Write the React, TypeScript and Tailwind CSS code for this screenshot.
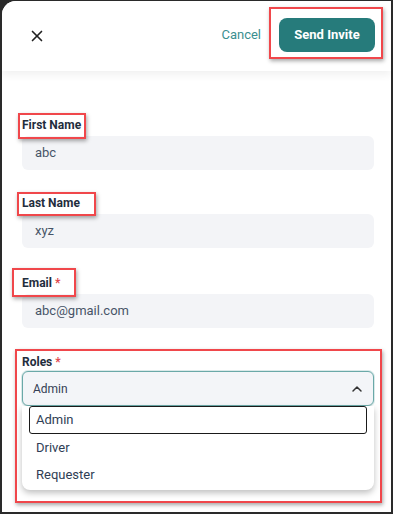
import { X, ChevronUp } from 'lucide-react';

function Mark({ className }: { className: string }) {
  // red annotation rectangle drawn over the screenshot
  return (
    <div
      className={`pointer-events-none absolute border-2 border-[#f0474b] shadow-[1px_2px_4px_rgba(0,0,0,0.35)] ${className}`}
    />
  );
}

function Field({ label, value, required, mark }: { label: string; value: string; required?: boolean; mark: string }) {
  return (
    <div>
      <div className="relative w-fit">
        <p className="text-[12px] leading-4 font-bold text-[#1f2d3d]">
          {label}
          {required && <span className="text-[#e0474c]"> *</span>}
        </p>
        <Mark className={mark} />
      </div>
      <div className="mt-[3px] h-[34px] rounded-md bg-[#f3f4f7] flex items-center px-[13px] text-[13px] text-[#475467]">
        {value}
      </div>
    </div>
  );
}

export default function App() {
  return (
    <div
      className="w-[393px] h-[514px] bg-[#2a2a2a] pl-[2px] pt-px pr-[2px] pb-[2px] overflow-hidden"
      style={{ fontFamily: 'Roboto, "Liberation Sans", sans-serif' }}
    >
      <div className="relative h-full bg-white rounded-tl-[14px] overflow-hidden">
        {/* Header */}
        <div className="relative h-[70px] flex items-center pl-[26px] pr-[16px] bg-white shadow-[0_4px_8px_rgba(0,0,0,0.06)] z-10">
          <X className="w-[18px] h-[18px] text-[#222]" strokeWidth={2.2} />
          <div className="flex-1" />
          <button className="text-[13px] text-[#3a8f8f] mr-[18px] mt-[-2px]">Cancel</button>
          <div className="relative">
            <button className="h-[34px] w-[96px] rounded-lg bg-[#267b7b] text-white text-[13px] font-bold mt-[-2px]">
              Send Invite
            </button>
            <Mark className="-left-[10px] -top-[13px] -right-[8px] -bottom-[7px]" />
          </div>
        </div>

        {/* Form */}
        <div className="pl-[20px] pr-[17px] pt-[46px]">
          <Field label="First Name" value="abc" mark="-left-[4px] -top-[4px] right-[-5px] -bottom-[6px]" />
          <div className="mt-[25px]">
            <Field label="Last Name" value="xyz" mark="-left-[5px] -top-[3px] right-[-16px] -bottom-[5px]" />
          </div>
          <div className="mt-[27px]">
            <Field label="Email" required value="abc@gmail.com" mark="-left-[10px] -top-[7px] right-[-16px] -bottom-[6px]" />
          </div>

          <div className="relative mt-[26px]">
            <Mark className="-left-[7px] -top-[5px] -right-[8px] bottom-[-13px]" />
            <p className="text-[12px] leading-4 font-bold text-[#1f2d3d]">
              Roles<span className="text-[#e0474c]"> *</span>
            </p>
            <div className="mt-px h-[35px] rounded-md border border-[#6aa9a8] bg-[#f3f5f8] flex items-center pl-[10px] pr-[8px] shadow-[0_0_0_1px_rgba(106,169,168,0.25)]">
              <span className="flex-1 text-[12px] text-[#344054]">Admin</span>
              <ChevronUp className="w-[16px] h-[16px] text-[#333]" strokeWidth={2.2} />
            </div>
            <div className="bg-white rounded-b-lg shadow-[0_3px_6px_rgba(0,0,0,0.25)] pb-[2px]">
              <div className="px-[7px]">
                <div className="h-[28px] border-[1.5px] border-[#1a1a1a] rounded-[3px] flex items-center pl-[6px] text-[13px] text-[#2f3e55]">
                  Admin
                </div>
              </div>
              <div className="h-[27px] flex items-center pl-[14px] text-[13px] text-[#2f3e55]">Driver</div>
              <div className="h-[27px] flex items-center pl-[14px] text-[13px] text-[#2f3e55]">Requester</div>
            </div>
          </div>
        </div>
      </div>
    </div>
  );
}
